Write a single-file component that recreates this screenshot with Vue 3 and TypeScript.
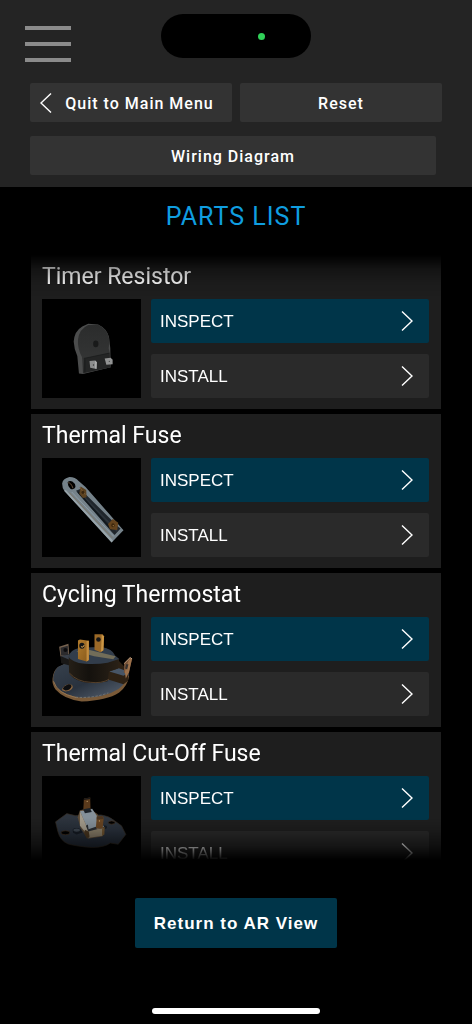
<script setup lang="ts">
type PartKind = 'resistor' | 'fuse' | 'thermostat' | 'cutoff'

interface Part {
  name: string
  kind: PartKind
}

const parts: Part[] = [
  { name: 'Timer Resistor', kind: 'resistor' },
  { name: 'Thermal Fuse', kind: 'fuse' },
  { name: 'Cycling Thermostat', kind: 'thermostat' },
  { name: 'Thermal Cut-Off Fuse', kind: 'cutoff' },
]

const actions = [
  { label: 'INSPECT', tone: 'primary' },
  { label: 'INSTALL', tone: 'plain' },
]
</script>

<template>
  <div class="screen">
    <header class="top">
      <div class="status">
        <button class="menu" type="button" aria-label="Menu">
          <span></span><span></span><span></span>
        </button>
        <div class="island"><i class="dot"></i></div>
      </div>
      <nav class="nav">
        <div class="row">
          <button class="nav-btn quit" type="button">
            <svg class="back" viewBox="0 0 12 20" aria-hidden="true">
              <path d="M11 0.5 L1 10 L11 19.5" fill="none" stroke="#fff" stroke-width="1.4" />
            </svg>
            <span class="label">Quit to Main Menu</span>
          </button>
          <button class="nav-btn" type="button"><span class="label">Reset</span></button>
        </div>
        <button class="nav-btn wide" type="button"><span class="label">Wiring Diagram</span></button>
      </nav>
    </header>

    <h1 class="heading">PARTS LIST</h1>

    <main class="list">
      <article v-for="part in parts" :key="part.kind" class="card">
        <h2 class="name">{{ part.name }}</h2>
        <div class="body">
          <div class="thumb">
            <svg v-if="part.kind === 'resistor'" viewBox="36 27 300 300" aria-hidden="true">
              <defs>
                <linearGradient id="resFace" x1="0" y1="0" x2="0" y2="1">
                  <stop offset="0" stop-color="#2b2c2c" />
                  <stop offset="1" stop-color="#373838" />
                </linearGradient>
              </defs>
              <path d="M148 253 L143 200 Q133 178 132 156 Q134 124 158 110 L176 102 L206 104 Q232 116 239 142 L243 176 L244 234 L160 254 Z" fill="#4b4c4c" />
              <path d="M160 253 L157 203 Q143 178 145 150 Q149 118 176 106 L206 105 Q233 117 239 145 Q242 162 238 176 L242 192 L244 234 Z" fill="url(#resFace)" />
              <path d="M163 207 L240 191 L244 234 L161 251 Z" fill="#242525" />
              <path d="M166 210 L166 249 M163 207 L240 191" stroke="#171818" stroke-width="2" fill="none" />
              <ellipse cx="199" cy="163" rx="8" ry="10" fill="#191a1a" />
              <path d="M180 215 L197 213 L202 219 L201 239 L182 235 Z" fill="#8c8d8d" />
              <path d="M197 213 L202 219 L201 239 L197 237 Z" fill="#b0b1b1" />
              <path d="M226 207 L244 205 L250 211 L250 225 L231 226 Z" fill="#929393" />
              <circle cx="192" cy="227" r="2" fill="#333" />
              <circle cx="240" cy="216" r="2" fill="#444" />
            </svg>

            <svg v-else-if="part.kind === 'fuse'" viewBox="36 22 300 300" aria-hidden="true">
              <path fill-rule="evenodd" d="M97 99 Q99 84 117 80 Q136 79 147 92 L168 110 L283 241 L247 278 L104 122 Q97 112 97 99 Z M114 95 Q113 106 122 115 Q132 120 137 111 Q139 100 128 93 Q119 90 114 95 Z" fill="#75828a" />
              <path d="M103 121 L247 278 L251 272 L108 119 Z" fill="#98a4aa" />
              <path d="M119 127 L249 264" stroke="#817767" stroke-width="3" />
              <path d="M126 125 L254 260" stroke="#8e9ba3" stroke-width="3" />
              <path d="M139 121 L152 116 L268 231 L274 236 L256 255 L248 247 Z" fill="#20262c" />
              <path d="M159 136 L264 244" stroke="#2c333a" stroke-width="5" />
              <path d="M145 125 L247 239" stroke="#11171c" stroke-width="5" />
              <path d="M115 97 Q124 96 130 114" stroke="#604c38" stroke-width="3" fill="none" />
              <path d="M153 108 L170 119 L171 141 L160 143 L149 130 Z" fill="#5c4220" />
              <path d="M151 111 L167 133" stroke="#775731" stroke-width="3" />
              <path d="M251 207 L267 218 L264 240 L242 238 L236 222 Z" fill="#64431d" />
              <ellipse cx="160" cy="126" rx="4" ry="5" fill="#37250f" />
              <ellipse cx="251" cy="226" rx="5" ry="6" fill="#3c260d" />
              <circle cx="252" cy="227" r="2" fill="#a17a43" />
            </svg>

            <svg v-else-if="part.kind === 'thermostat'" viewBox="36 18 300 300" aria-hidden="true">
              <defs>
                <linearGradient id="thBase" x1="0" y1="0" x2="1" y2="1">
                  <stop offset="0" stop-color="#37414d" />
                  <stop offset="0.5" stop-color="#29323e" />
                  <stop offset="1" stop-color="#5b6675" />
                </linearGradient>
                <linearGradient id="thSide" x1="0" y1="0" x2="1" y2="0">
                  <stop offset="0" stop-color="#251f17" />
                  <stop offset="0.4" stop-color="#14110d" />
                  <stop offset="1" stop-color="#2a2117" />
                </linearGradient>
                <linearGradient id="brass" x1="0" y1="0" x2="1" y2="1">
                  <stop offset="0" stop-color="#b17b2c" />
                  <stop offset="1" stop-color="#87591c" />
                </linearGradient>
              </defs>
              <path d="M68 205 Q69 184 83 171 L112 157 L250 170 L300 196 Q296 226 270 247 Q232 272 156 274 Q103 268 77 238 Q66 222 68 205 Z" fill="#7a5a38" />
              <path d="M70 199 Q73 180 85 169 L112 157 L260 172 L300 191 Q293 217 268 236 Q228 262 155 263 Q108 257 83 235 Q68 220 70 199 Z" fill="url(#thBase)" />
              <path d="M71 213 Q82 250 139 262" stroke="#957451" stroke-width="3" fill="none" />
              <path d="M138 261 Q190 265 237 248" stroke="#8a8984" stroke-width="2" stroke-dasharray="7 5" fill="none" />
              <path d="M97 240 Q97 228 116 222 Q130 221 129 232 Q125 243 107 244 Z" fill="#8e6841" />
              <path d="M99 236 Q102 227 116 222 Q127 221 125 230 Q121 239 107 241 Z" fill="#0d0e10" />
              <path d="M88 108 L116 99 L119 137 L92 138 Z" fill="#76624f" />
              <path d="M92 111 L114 105 L116 134 L94 135 Z" fill="#2c2b2d" />
              <circle cx="107" cy="118" r="6" fill="#0b0b0d" />
              <path d="M92 138 L120 130 L120 165 L94 158 Z" fill="#191817" />
              <path d="M92 136 L118 132 L128 139 L117 147 Z" fill="#39404a" />
              <path d="M236 157 L268 150 L297 180 L297 211 L283 222 L234 207 Z" fill="#2d2114" />
              <path d="M240 183 L269 173 L301 185 L283 196 Z" fill="#475566" />
              <path d="M117 139 Q119 118 151 111 L215 109 Q249 115 257 135 L270 146 L266 174 L239 183 L235 213 Q200 222 159 215 Q123 204 118 187 Z" fill="url(#thSide)" />
              <path d="M117 139 Q119 118 151 111 L215 109 Q250 114 257 135 L270 145 L235 157 Q205 162 166 160 Q125 155 117 139 Z" fill="#323d4b" />
              <path d="M119 188 Q143 215 184 216 Q216 220 239 207" stroke="#55402a" stroke-width="3" fill="none" />
              <path d="M140 122 L171 116 L259 137 L252 146 L194 137 Z" fill="#726d59" />
              <path d="M195 70 L220 70 L224 76 L222 119 L213 125 L195 117 Z" fill="#9b6927" />
              <path d="M217 72 L224 76 L222 119 L215 123 Z" fill="#cb9645" />
              <circle cx="207" cy="86" r="7" fill="#151617" />
              <path d="M145 89 L151 86 L178 90 L178 148 L171 153 L145 145 Z" fill="url(#brass)" />
              <path d="M171 91 L178 90 L178 148 L171 153 Z" fill="#c48e41" />
              <ellipse cx="157" cy="105" rx="8" ry="9" fill="#121416" />
              <path d="M154 108 Q161 113 164 103" stroke="#daa653" stroke-width="3" fill="none" />
              <path d="M285 159 L303 141 L309 146 L298 190 L284 187 Z" fill="#745239" />
              <path d="M299 148 L309 142 L300 185 L290 204 L287 184 Z" fill="#9c714b" />
              <path d="M285 159 L303 141 L309 145" stroke="#c6a382" stroke-width="3" fill="none" />
              <path d="M291 161 L298 161 L294 177 L288 174 Z" fill="#34302e" />
            </svg>

            <svg v-else viewBox="36 30 300 300" aria-hidden="true">
              <defs>
                <linearGradient id="plate" x1="0" y1="0" x2="0" y2="1">
                  <stop offset="0" stop-color="#2f363f" />
                  <stop offset="1" stop-color="#222a36" />
                </linearGradient>
              </defs>
              <path d="M77 169 L111 144 L137 150 L215 148 Q240 151 255 165 L277 181 L290 207 L267 237 L243 233 Q226 246 188 247 Q139 243 115 236 Q91 226 84 198 Z" fill="url(#plate)" stroke="#342a20" stroke-width="2" />
              <ellipse cx="107" cy="202" rx="13" ry="6" fill="#000" stroke="#493420" stroke-width="2" />
              <ellipse cx="247" cy="171" rx="10" ry="5" fill="#000" stroke="#493420" stroke-width="2" />
              <path d="M129 192 Q137 184 153 191 L159 201 L141 207 L130 202 Z" fill="#151b23" />
              <ellipse cx="141" cy="194" rx="10" ry="5" fill="#3b444e" />
              <ellipse cx="223" cy="185" rx="10" ry="6" fill="#181d24" />
              <path d="M144 155 L151 134 L178 128 L204 145 L224 188 L219 213 L175 220 L153 188 Z" fill="#5b4a36" />
              <path d="M151 137 L188 129 L224 184 L178 198 Z" fill="#849099" />
              <path d="M151 137 L178 198 L173 207 L151 181 Z" fill="#a29a8a" />
              <path d="M171 196 L222 188 L220 211 L179 217 Z" fill="#877c67" />
              <path d="M166 193 L178 199 L180 214 L171 219 L164 204 Z" fill="#48351f" />
              <path d="M218 190 L226 184 L225 207 L218 212 Z" fill="#6b512e" />
              <path d="M163 98 L182 95 L183 132 L161 135 Z" fill="#5a3a1c" />
              <path d="M163 98 L182 95 L183 100 L163 103 Z" fill="#1b1917" />
              <circle cx="173" cy="107" r="2" fill="#b39362" />
              <path d="M161 131 L181 127 L187 139 L166 143 Z" fill="#1b2127" />
              <path d="M202 153 L219 151 L223 157 L220 188 L199 190 Z" fill="#684523" />
              <path d="M202 153 L219 151 L223 160 L202 162 Z" fill="#493420" />
              <circle cx="210" cy="166" r="2" fill="#c09a66" />
              <path d="M169 181 L175 177 L177 191 L199 184 L202 191 L176 198 Z" fill="#292c30" />
            </svg>
          </div>
          <div class="actions">
            <button
              v-for="action in actions"
              :key="action.label"
              type="button"
              class="action"
              :class="action.tone"
              :aria-label="`${action.label} ${part.name}`"
            >
              <span class="label">{{ action.label }}</span>
              <svg class="chevron" viewBox="0 0 12 20" aria-hidden="true">
                <path d="M1 0.5 L11 10 L1 19.5" fill="none" stroke="#fff" stroke-width="1.4" />
              </svg>
            </button>
          </div>
        </div>
      </article>
    </main>

    <footer class="bottom">
      <button class="return" type="button"><span class="label">Return to AR View</span></button>
      <div class="home"></div>
    </footer>
  </div>
</template>

<style>
body {
  margin: 0;
  background: #000;
}
</style>

<style scoped>
.screen {
  display: flex;
  flex-direction: column;
  height: 100vh;
  background: #000;
  color: #fff;
  font-family: Roboto, "Liberation Sans", sans-serif;
}
button {
  margin: 0;
  padding: 0;
  border: 0;
  color: inherit;
  font: inherit;
  cursor: pointer;
}
.label {
  padding-top: 2px;
}
.top {
  flex: none;
  padding: 14px 0 12px;
  background: #242424;
}
.status {
  display: grid;
  grid-template-columns: 1fr auto 1fr;
  align-items: start;
  padding: 0 25px;
}
.menu {
  display: flex;
  flex-direction: column;
  gap: 12px;
  width: 46px;
  padding-top: 12px;
  background: none;
}
.menu span {
  height: 4px;
  background: #8b8b8b;
}
.island {
  display: flex;
  align-items: center;
  justify-content: flex-end;
  box-sizing: border-box;
  width: 150px;
  height: 44px;
  padding-right: 46px;
  border-radius: 22px;
  background: #000;
}
.dot {
  width: 7px;
  height: 7px;
  border-radius: 50%;
  background: #30d158;
}
.nav {
  display: flex;
  flex-direction: column;
  gap: 14px;
  padding: 21px 30px 0;
}
.row {
  display: grid;
  grid-template-columns: 1fr 1fr;
  gap: 8px;
}
.nav-btn {
  display: flex;
  align-items: center;
  justify-content: center;
  height: 39px;
  border-radius: 2px;
  background: #333;
  font-size: 16px;
  font-weight: 500;
  letter-spacing: 1px;
  line-height: 20px;
  white-space: nowrap;
}
.quit {
  padding-right: 8px;
}
.wide {
  margin-right: 6px;
}
.back {
  width: 12px;
  height: 20px;
  margin-right: 13px;
}
.heading {
  flex: none;
  margin: 0 0 8px;
  color: #0f9ee0;
  font-size: 25px;
  font-weight: 400;
  letter-spacing: 1px;
  line-height: 60px;
  text-align: center;
}
.list {
  display: flex;
  flex: 1;
  flex-direction: column;
  gap: 5px;
  min-height: 0;
  margin: 0 31px;
  overflow-y: auto;
  scrollbar-width: none;
  --fade: linear-gradient(
    to bottom,
    transparent,
    rgb(0 0 0 / 65%) 14px,
    rgb(0 0 0 / 90%) 28px,
    #000 44px,
    #000 calc(100% - 44px),
    rgb(0 0 0 / 85%) calc(100% - 32px),
    rgb(0 0 0 / 50%) calc(100% - 16px),
    transparent calc(100% - 2px)
  );
  -webkit-mask-image: var(--fade);
  mask-image: var(--fade);
}
.card {
  flex: none;
  padding: 0 12px 11px 11px;
  background: #1e1e1e;
}
.name {
  margin: 0;
  font-size: 23px;
  font-weight: 400;
  line-height: 44px;
}
.body {
  display: flex;
  gap: 10px;
}
.thumb {
  flex: none;
  width: 99px;
  height: 99px;
  background: #000;
}
.thumb svg {
  display: block;
  width: 100%;
  height: 100%;
}
.actions {
  display: flex;
  flex: 1;
  flex-direction: column;
  gap: 11px;
}
.action {
  display: flex;
  align-items: center;
  justify-content: space-between;
  height: 44px;
  padding: 0 16px 0 9px;
  border-radius: 2px;
  font-family: "Liberation Sans", Arial, sans-serif;
  font-size: 17px;
  line-height: 16px;
}
.primary {
  background: #003549;
}
.plain {
  background: #2a2a2a;
}
.chevron {
  width: 12px;
  height: 20px;
}
.bottom {
  display: flex;
  flex: none;
  flex-direction: column;
  align-items: center;
  gap: 60px;
  padding: 36px 0 10px;
}
.return {
  display: flex;
  align-items: center;
  justify-content: center;
  width: 202px;
  height: 50px;
  border-radius: 2px;
  background: #003549;
  font-family: "Liberation Sans", Arial, sans-serif;
  font-size: 17px;
  font-weight: 700;
  letter-spacing: 1px;
}
.home {
  width: 168px;
  height: 6px;
  border-radius: 3px;
  background: #fff;
}
</style>
